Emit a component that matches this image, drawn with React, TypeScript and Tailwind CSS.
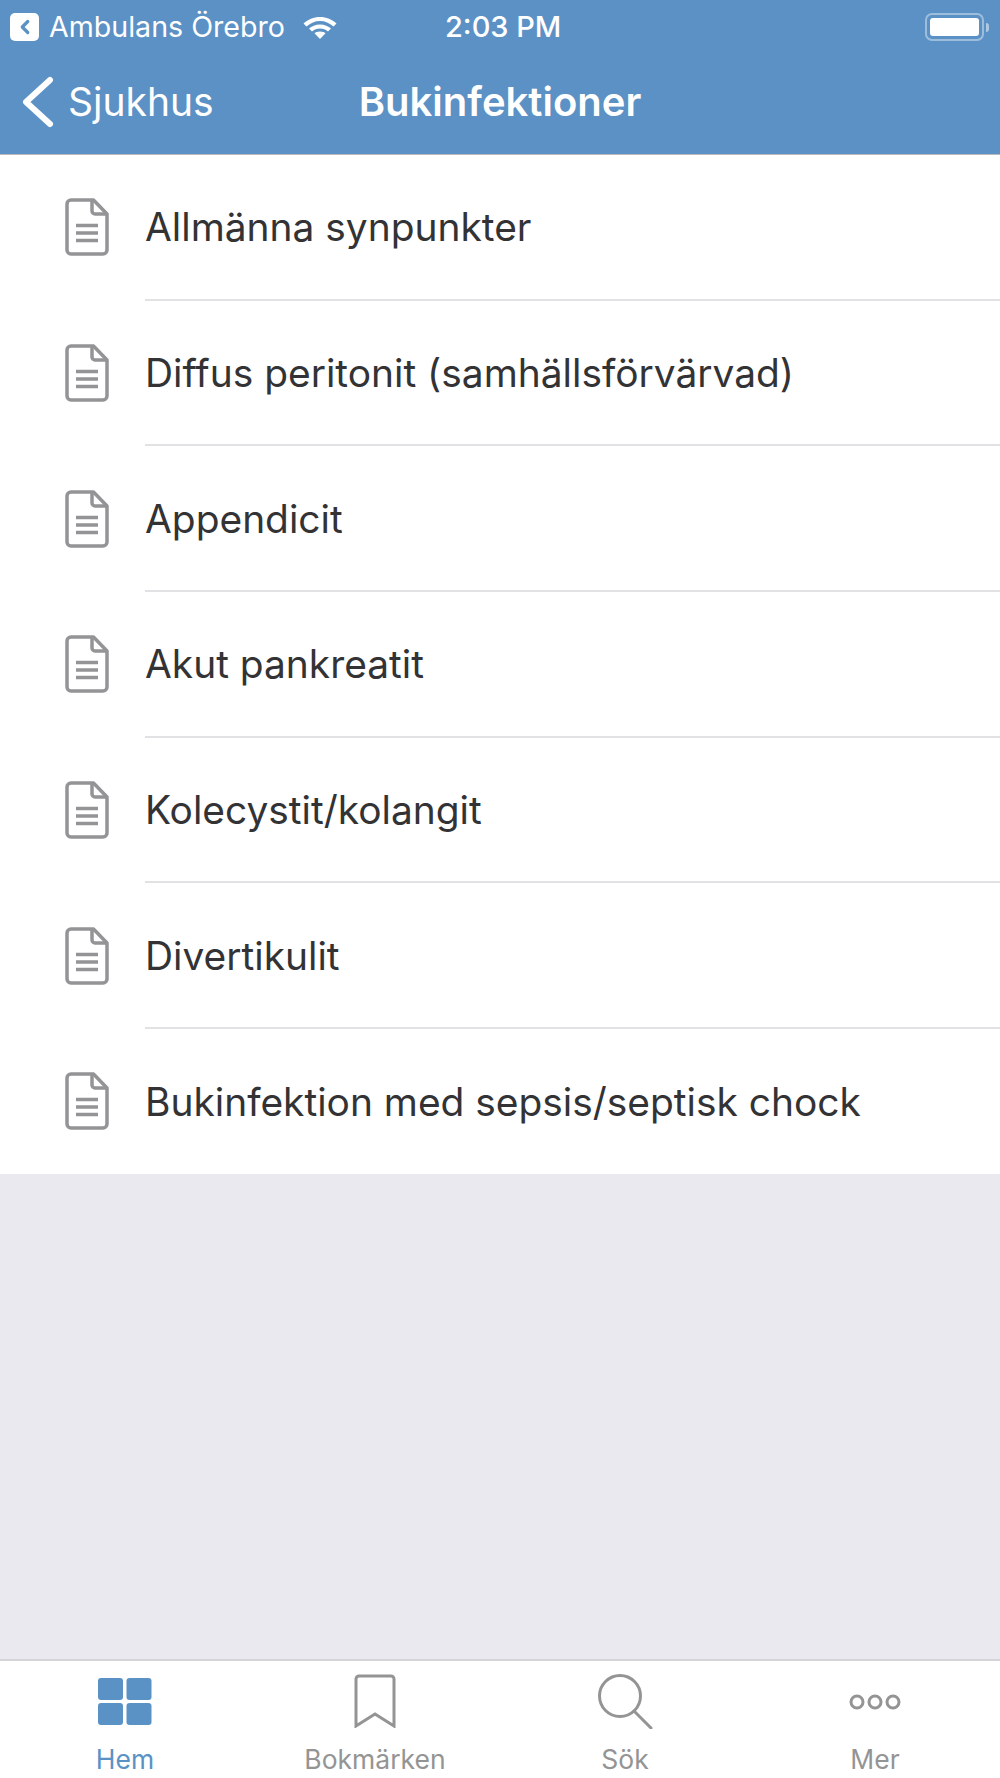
import { ChevronLeft } from "lucide-react";

const items = [
	"Allmänna synpunkter",
	"Diffus peritonit (samhällsförvärvad)",
	"Appendicit",
	"Akut pankreatit",
	"Kolecystit/kolangit",
	"Divertikulit",
	"Bukinfektion med sepsis/septisk chock",
];

function DocIcon() {
	return (
		<svg width="44" height="58" viewBox="0 0 44 58" fill="none" stroke="#949497" strokeWidth="3.5" strokeLinejoin="round" className="shrink-0">
			<path d="M6 2h22.5L42 16v36a4 4 0 0 1-4 4H6a4 4 0 0 1-4-4V6a4 4 0 0 1 4-4z" />
			<path d="M27 2v11a3 3 0 0 0 3 3H42" />
			<path d="M11 27.500h22M11 35h22M11 42.500h22" strokeWidth="3.4" />
		</svg>
	);
}

function Row({ label, last }: { label: string; last: boolean }) {
	return (
		<div className={`flex items-stretch ${last ? "h-[145px]" : "h-[145.7px]"}`}>
			<div className="flex w-[145px] shrink-0 items-center pl-[65px] pb-[1px]">
				<DocIcon />
			</div>
			<div className={`flex flex-1 items-center pt-[1px] text-[38.9px] text-[#333336] ${last ? "" : "border-b-2 border-[#e2e2e4]"}`}>
				{label}
			</div>
		</div>
	);
}

function Tab({ label, active, children }: { label: string; active?: boolean; children: React.ReactNode }) {
	return (
		<div className={`flex flex-col items-center ${active ? "text-[#5b92c5]" : "text-[#949494]"}`}>
			<div className="flex h-[56px] items-center justify-center">{children}</div>
			<div className="mt-[15px] text-[26.5px] leading-[30px]">{label}</div>
		</div>
	);
}

export default function App() {
	return (
		<div className="flex h-[1778px] w-[1000px] flex-col overflow-hidden bg-[#e9e9ef] font-['Inter','Noto_Sans',sans-serif]">
			<header className="h-[155px] shrink-0 border-b border-[#b9b9bb] bg-[#5b91c5] text-white">
				<div className="flex h-[54px] items-center">
					<div className="ml-[10px] flex h-[28px] w-[29px] items-center justify-center rounded-[5px] bg-white">
						<ChevronLeft size={22} strokeWidth={3.5} color="#5b91c5" />
					</div>
					<span className="ml-[10px] text-[28.6px]">Ambulans Örebro</span>
					<svg width="36" height="26" viewBox="0 0 36 26" fill="white" className="ml-[17px] mb-[3px]">
						<path d="M18 4C11.5 4 6 6.500 1.500 10.500l3 3C8.500 10 13 8 18 8s9.500 2 13.500 5.500l3-3C30 6.500 24.500 4 18 4z" />
						<path d="M18 11.500c-4.500 0-8.500 1.700-11 4l3 3c2-1.800 5-3 8-3s6 1.200 8 3l3-3c-2.500-2.300-6.500-4-11-4z" />
						<path d="M18 18.500c-2.500 0-4.500 .8-5.500 1.800L18 26l5.500-5.700c-1-1-3-1.800-5.500-1.800z" />
					</svg>
					<span className="ml-[107px] text-[29px] font-medium">2:03 PM</span>
					<div className="ml-auto mr-[11px] flex items-center gap-[2px]">
						<div className="h-[28px] w-[59px] rounded-[7px] border-2 border-white/40 p-[3px]">
							<div className="h-full w-full rounded-[3px] bg-white" />
						</div>
						<div className="h-[9px] w-[3px] rounded-r-full bg-white/50" />
					</div>
				</div>
				<div className="relative flex h-[100px] items-center pb-[4px]">
					<svg width="34" height="52" viewBox="0 0 34 52" fill="none" stroke="white" strokeWidth="6" strokeLinecap="round" strokeLinejoin="round" className="ml-[21px]">
						<path d="M29 4L5 26l24 22" />
					</svg>
					<span className="ml-[13px] text-[39px]">Sjukhus</span>
					<span className="absolute inset-x-0 text-center text-[40px] font-semibold">Bukinfektioner</span>
				</div>
			</header>
			<main className="shrink-0 bg-white">
				{items.map((item, i) => (
					<Row key={item} label={item} last={i === items.length - 1} />
				))}
			</main>
			<div className="flex-1" />
			<nav className="grid h-[119px] shrink-0 grid-cols-4 border-t-2 border-[#d4d4d8] bg-white pt-[12px]">
				<Tab label="Hem" active>
					<svg width="54" height="48" viewBox="0 0 54 48" fill="#5b92c5" className="mt-[2px]">
						<rect x="0" y="0" width="25" height="22" rx="3" />
						<rect x="28.500" y="0" width="25" height="22" rx="3" />
						<rect x="0" y="25" width="25" height="22" rx="3" />
						<rect x="28.500" y="25" width="25" height="22" rx="3" />
					</svg>
				</Tab>
				<Tab label="Bokmärken">
					<svg width="42" height="54" viewBox="0 0 42 54" fill="none" stroke="currentColor" strokeWidth="3">
						<path d="M2 52V5a3 3 0 0 1 3-3h32a3 3 0 0 1 3 3v47L21 40z" />
					</svg>
				</Tab>
				<Tab label="Sök">
					<svg width="56" height="56" viewBox="0 0 56 56" fill="none" stroke="currentColor" strokeWidth="3" strokeLinecap="round">
						<circle cx="23" cy="23" r="20.500" />
						<path d="M37 38l17 17" />
					</svg>
				</Tab>
				<Tab label="Mer">
					<svg width="52" height="16" viewBox="0 0 52 16" fill="none" stroke="currentColor" strokeWidth="3" className="mt-[1px]">
						<circle cx="8" cy="8" r="6" />
						<circle cx="26" cy="8" r="6" />
						<circle cx="44" cy="8" r="6" />
					</svg>
				</Tab>
			</nav>
		</div>
	);
}
